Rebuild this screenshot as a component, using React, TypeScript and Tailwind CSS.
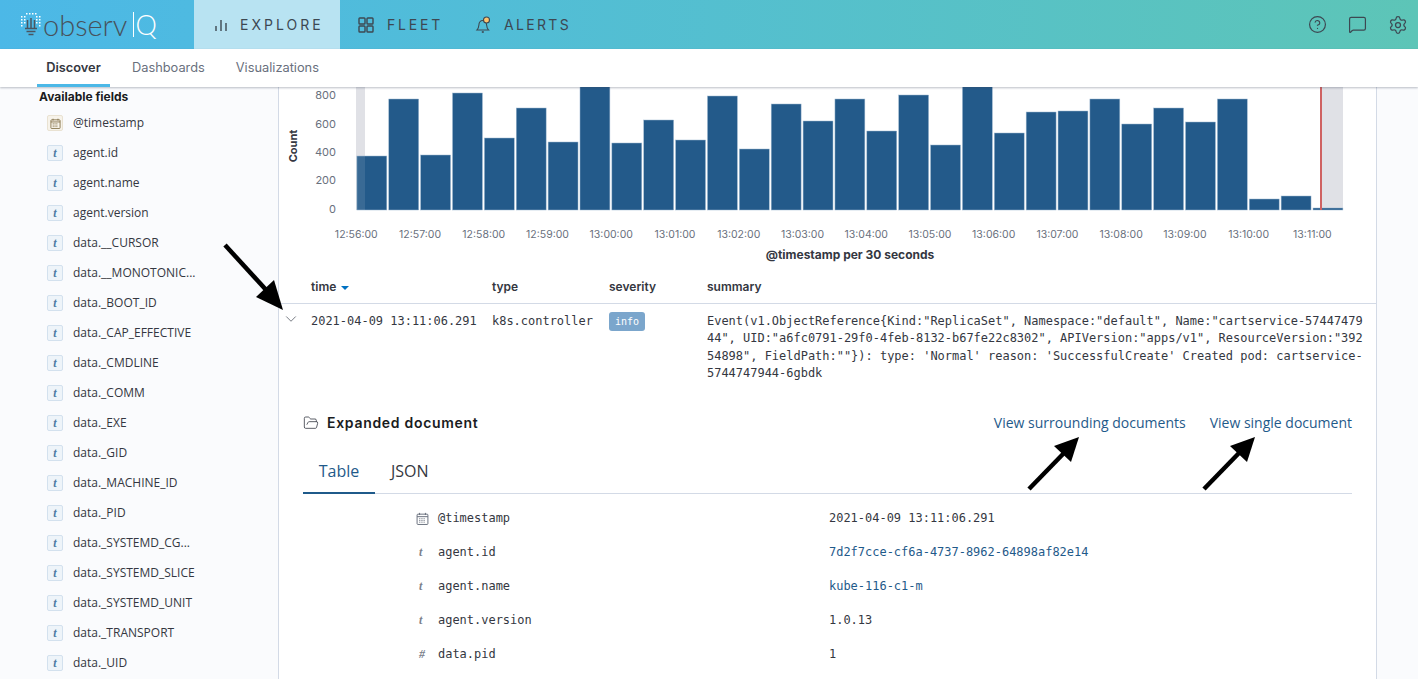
import { ChevronDown, CircleHelp, FolderOpen, MessageSquare, Settings } from 'lucide-react';

const tops = [
  156, 99, 155, 93, 138, 108, 142, 86, 143, 120, 140, 96, 149, 104, 121, 99, 131, 95, 145, 86, 133, 112, 111, 99, 124,
  108, 122, 99, 199, 196, 208,
];
const xLabels = [
  '12:56:00', '12:57:00', '12:58:00', '12:59:00', '13:00:00', '13:01:00', '13:02:00', '13:03:00',
  '13:04:00', '13:05:00', '13:06:00', '13:07:00', '13:08:00', '13:09:00', '13:10:00', '13:11:00',
];
const yLabels = [
  ['800', 99],
  ['600', 128],
  ['400', 156],
  ['200', 184],
  ['0', 213],
] as const;

const fields = [
  'agent.id', 'agent.name', 'agent.version', 'data.__CURSOR', 'data.__MONOTONIC...', 'data._BOOT_ID',
  'data._CAP_EFFECTIVE', 'data._CMDLINE', 'data._COMM', 'data._EXE', 'data._GID', 'data._MACHINE_ID',
  'data._PID', 'data._SYSTEMD_CG...', 'data._SYSTEMD_SLICE', 'data._SYSTEMD_UNIT', 'data._TRANSPORT', 'data._UID',
];

const CalendarGlyph = ({ className }: { className: string }) => (
  <svg viewBox="0 0 12 12" className={className} fill="none" stroke="currentColor" strokeWidth="0.9">
    <rect x="1" y="2" width="10" height="9.5" rx="0.8" />
    <path d="M1 4.3h10M3.3 0.8v2M8.7 0.8v2" />
    <path d="M3 6.2h6M3 7.8h6M3 9.4h6" strokeDasharray="1 1" />
  </svg>
);

const Logo = () => (
  <div className="flex h-full w-[194px] items-center pl-[20px]">
    <svg viewBox="0 0 22 26" className="mr-[1px] h-[26px] w-[22px] shrink-0">
      <g fill="#ffffff">
        {[1, 4, 7, 10].map((x) => (
          <rect key={x} x={x + 5} y="1" width="1.5" height="1.5" />
        ))}
        {[1, 4, 7, 10].map((y) => (
          <rect key={y} x="1" y={y + 3} width="1.5" height="1.5" />
        ))}
        {[1, 4, 7].map((y) => (
          <rect key={y} x="4" y={y + 3} width="1.5" height="1.5" />
        ))}
        {[1, 4, 7].map((y) => (
          <rect key={y} x="16" y={y + 3} width="1.5" height="1.5" />
        ))}
        {[1, 4, 7, 10].map((y) => (
          <rect key={y} x="19" y={y + 3} width="1.5" height="1.5" />
        ))}
      </g>
      <path d="M7.5 8v8M11 6v10M14.5 8v8" stroke="#4a5560" strokeWidth="1.5" />
      <path d="M5 16.5h12M6.5 19.5h9M8.5 22.5h5" stroke="#4a5560" strokeWidth="1.5" />
    </svg>
    <span className="font-['Lato'] text-[29px] font-light leading-none text-[#47525c]">observ</span>
    <span className="ml-[6px] h-[25px] w-px bg-white" />
    <span className="ml-[1px] font-['Lato'] text-[27px] font-light leading-none text-white">Q</span>
  </div>
);

const TopNav = () => (
  <header className="flex h-[49px] shrink-0 items-center bg-gradient-to-r from-[#4cb8e7] to-[#5dc5b7] text-[#3d4852]">
    <Logo />
    <div className="flex h-full w-[146px] items-center bg-[#b8e3f2] pl-[19px]">
      <svg viewBox="0 0 16 16" className="h-4 w-4" fill="none" stroke="currentColor" strokeWidth="1.4">
        <path d="M3 9v5M8 3v11M13 6v8" />
      </svg>
      <span className="ml-[11px] text-sm tracking-[0.215em]">EXPLORE</span>
    </div>
    <div className="ml-[18px] flex items-center">
      <svg viewBox="0 0 16 16" className="h-4 w-4" fill="none" stroke="currentColor" strokeWidth="1.4">
        <rect x="1" y="1" width="6" height="6" rx="0.8" />
        <rect x="9" y="1" width="6" height="6" rx="0.8" />
        <rect x="1" y="9" width="6" height="6" rx="0.8" />
        <rect x="9" y="9" width="6" height="6" rx="0.8" />
      </svg>
      <span className="ml-[13px] text-sm tracking-[0.2em]">FLEET</span>
    </div>
    <div className="ml-[33px] flex items-center">
      <svg viewBox="0 0 16 16" className="h-4 w-4 overflow-visible" fill="none" stroke="currentColor" strokeWidth="1.1">
        <path d="M1 13h11.5c-1-1-1.6-2-1.8-4.5C10.4 5.5 9 3.5 6.8 3.5 4.5 3.5 3 5.5 2.8 8.5 2.6 11 2 12 1 13Z" />
        <path d="M5.8 15h2" strokeWidth="1.6" />
        <circle cx="10.5" cy="3" r="3" fill="#fdc36f" />
      </svg>
      <span className="ml-[12px] text-sm tracking-[0.165em]">ALERTS</span>
    </div>
    <div className="ml-auto flex items-center gap-[21px] pr-[10px]">
      <CircleHelp className="h-[19px] w-[19px]" strokeWidth={1.5} />
      <MessageSquare className="h-[19px] w-[19px]" strokeWidth={1.5} />
      <Settings className="h-[20px] w-[20px]" strokeWidth={1.5} />
    </div>
  </header>
);

const SubNav = () => (
  <nav className="relative z-10 flex h-[38px] shrink-0 items-stretch bg-white pl-[37px] text-[12.8px] text-[#69707d] shadow-[0_1px_2px_rgba(60,70,90,0.35)]">
    <span className="flex w-[73px] items-center justify-center border-b-[3px] border-[#4cb8e7] pt-[3px] font-semibold text-[#343741]">
      Discover
    </span>
    <span className="ml-[22px] flex items-center">Dashboards</span>
    <span className="ml-[31px] flex items-center">Visualizations</span>
  </nav>
);

const Sidebar = () => (
  <aside className="w-[279px] shrink-0 overflow-hidden border-r border-[#d3dae6] bg-[#fafbfd] pt-[2px]">
    <h3 className="pl-[39px] font-['Inter'] text-xs font-bold leading-[16px] text-[#1a1c21]">Available fields</h3>
    <ul className="mt-[3px] pl-[47px]">
      <li className="flex h-[30px] items-center font-['Open_Sans'] text-xs text-[#343741]">
        <span className="flex h-[16px] w-[16px] items-center justify-center rounded-[2px] border border-[#e9e2d2] bg-[#f7f3ea] text-[#7d6a3f]">
          <CalendarGlyph className="h-[11px] w-[11px]" />
        </span>
        <span className="ml-[10px]">@timestamp</span>
      </li>
      {fields.map((f) => (
        <li key={f} className="flex h-[30px] items-center font-['Open_Sans'] text-xs text-[#343741]">
          <span className="flex h-[16px] w-[16px] items-center justify-center rounded-[2px] border border-[#d3e1ee] bg-[#eef4f9] font-['Liberation_Serif'] text-[12px] font-bold italic text-[#4d7ba3]">
            t
          </span>
          <span className="ml-[10px]">{f}</span>
        </li>
      ))}
    </ul>
  </aside>
);

const Histogram = () => (
  <svg viewBox="279 87 1097 183" className="block h-[183px] w-[1097px] shrink-0 font-['Inter']">
    <rect x="356" y="87" width="9" height="123" fill="#e0e1e6" />
    <rect x="1321" y="87" width="22" height="123" fill="#e0e1e6" />
    {tops.map((top, i) => (
      <rect
        key={i}
        x={356.9 + i * 31.87}
        y={top}
        width={29.9}
        height={210 - top}
        fill="#235a8a"
        stroke="#9db8d0"
        strokeWidth="0.5"
      />
    ))}
    <rect x="356.7" y="156" width="8.3" height="54" fill="#ffffff" fillOpacity="0.1" />
    <rect x="1320" y="87" width="2" height="123" fill="#cf6262" />
    {yLabels.map(([label, y]) => (
      <text key={label} x="336" y={y} textAnchor="end" fontSize="11" fill="#69707d">
        {label}
      </text>
    ))}
    <text x="297" y="146" textAnchor="middle" fontSize="11" fontWeight="700" fill="#343741" transform="rotate(-90 297 146)">
      Count
    </text>
    {xLabels.map((label, i) => (
      <text key={label} x={356.3 + i * 63.74} y="238" textAnchor="middle" fontSize="10.5" fill="#69707d">
        {label}
      </text>
    ))}
    <text x="850" y="259" textAnchor="middle" fontSize="12" fontWeight="700" fill="#343741">
      @timestamp per 30 seconds
    </text>
  </svg>
);

const rows = [
  { icon: 't', name: 'agent.id', value: '7d2f7cce-cf6a-4737-8962-64898af82e14', link: true },
  { icon: 't', name: 'agent.name', value: 'kube-116-c1-m', link: true },
  { icon: 't', name: 'agent.version', value: '1.0.13', link: false },
  { icon: '#', name: 'data.pid', value: '1', link: false },
];

const monoText = "font-['DejaVu_Sans_Mono'] text-[11.97px] text-[#343741]";

const ExpandedDoc = () => (
  <div className="mx-[24px] mt-[30px]">
    <div className="flex h-[20px] items-center">
      <FolderOpen className="h-4 w-4 text-[#343741]" strokeWidth={1.2} />
      <span className="ml-[8px] font-['Inter'] text-sm font-semibold tracking-[0.05em] text-[#1a1c21]">Expanded document</span>
      <a className="ml-auto font-['Open_Sans'] text-sm text-[#1f5a8a]">View surrounding documents</a>
      <a className="ml-[24px] font-['Open_Sans'] text-sm text-[#1f5a8a]">View single document</a>
    </div>
    <div className="mt-[19px] flex h-[42px] border-b border-[#d3dae6] pb-[2px] font-['Open_Sans'] text-base">
      <span className="-mb-[3px] flex w-[72px] items-center justify-center border-b-2 border-[#1f5a8a] pb-[1px] text-[#1f5a8a]">Table</span>
      <span className="ml-[16px] flex items-center text-[#343741]">JSON</span>
    </div>
    <div className="mt-[8px] pl-[113px]">
      <div className="flex h-[34px] items-center">
        <span className="flex w-[22px] justify-start text-[#69707d]">
          <CalendarGlyph className="h-[13px] w-[13px]" />
        </span>
        <span className={`w-[391px] ${monoText}`}>@timestamp</span>
        <span className={monoText}>2021-04-09 13:11:06.291</span>
      </div>
      {rows.map((r) => (
        <div key={r.name} className="flex h-[34px] items-center">
          <span className="w-[22px] pb-[2px] pl-[3px] font-['Liberation_Serif'] text-[12px] font-bold italic text-[#7d828c]">{r.icon}</span>
          <span className={`w-[391px] ${monoText}`}>{r.name}</span>
          <span className={r.link ? "font-['DejaVu_Sans_Mono'] text-[11.97px] text-[#1f5a8a]" : monoText}>{r.value}</span>
        </div>
      ))}
    </div>
  </div>
);

const LogTable = () => (
  <div>
    <div className="flex h-[34px] items-center border-b border-[#d3dae6] font-['Inter'] text-xs font-semibold text-[#343741]">
      <span className="ml-[32px] flex w-[181px] items-center">
        time
        <span className="ml-[5px] mt-[3px] h-0 w-0 border-x-[4px] border-t-[4px] border-x-transparent border-t-[#0071c2]" />
      </span>
      <span className="w-[117px]">type</span>
      <span className="w-[98px]">severity</span>
      <span>summary</span>
    </div>
    <div className="flex pt-[9px]">
      <span className="-mt-[3px] w-[32px] pl-[3px] text-[#4a4f5a]">
        <ChevronDown className="h-[18px] w-[18px]" strokeWidth={1} />
      </span>
      <span className={`w-[181px] leading-[17.4px] ${monoText}`}>2021-04-09 13:11:06.291</span>
      <span className={`w-[117px] leading-[17.4px] ${monoText}`}>k8s.controller</span>
      <span className="w-[98px]">
        <span className="-mt-[1px] flex h-[19px] w-[36px] items-center justify-center rounded-[3px] bg-[#7ba6cc] font-['DejaVu_Sans_Mono'] text-[10px] text-white">
          info
        </span>
      </span>
      <div className={`whitespace-pre leading-[17.4px] ${monoText}`}>
        <div>{'Event(v1.ObjectReference{Kind:"ReplicaSet", Namespace:"default", Name:"cartservice-57447479'}</div>
        <div>{'44", UID:"a6fc0791-29f0-4feb-8132-b67fe22c8302", APIVersion:"apps/v1", ResourceVersion:"392'}</div>
        <div>{"54898\", FieldPath:\"\"}): type: 'Normal' reason: 'SuccessfulCreate' Created pod: cartservice-"}</div>
        <div>5744747944-6gbdk</div>
      </div>
    </div>
  </div>
);

const Arrows = () => (
  <svg viewBox="0 0 1418 679" className="pointer-events-none absolute inset-0 h-[679px] w-[1418px]">
    <g stroke="#000000" strokeWidth="4.5" fill="#000000">
      <path d="M225 245 268 292" fill="none" />
      <path d="M1029 489 1064 453" fill="none" />
      <path d="M1204 489 1239 453" fill="none" />
    </g>
    <polygon points="283,310 256,297 274,280" fill="#000000" />
    <polygon points="1079,437 1054,446 1071,462" fill="#000000" />
    <polygon points="1255,437 1230,446 1247,462" fill="#000000" />
  </svg>
);

export default function App() {
  return (
    <div className="relative flex h-[679px] w-[1418px] flex-col overflow-hidden bg-[#fafbfd] font-['Inter']">
      <TopNav />
      <SubNav />
      <div className="flex min-h-0 flex-1">
        <Sidebar />
        <main className="w-[1098px] shrink-0 overflow-hidden border-r border-[#d3dae6] bg-white">
          <Histogram />
          <LogTable />
          <ExpandedDoc />
        </main>
      </div>
      <Arrows />
    </div>
  );
}
